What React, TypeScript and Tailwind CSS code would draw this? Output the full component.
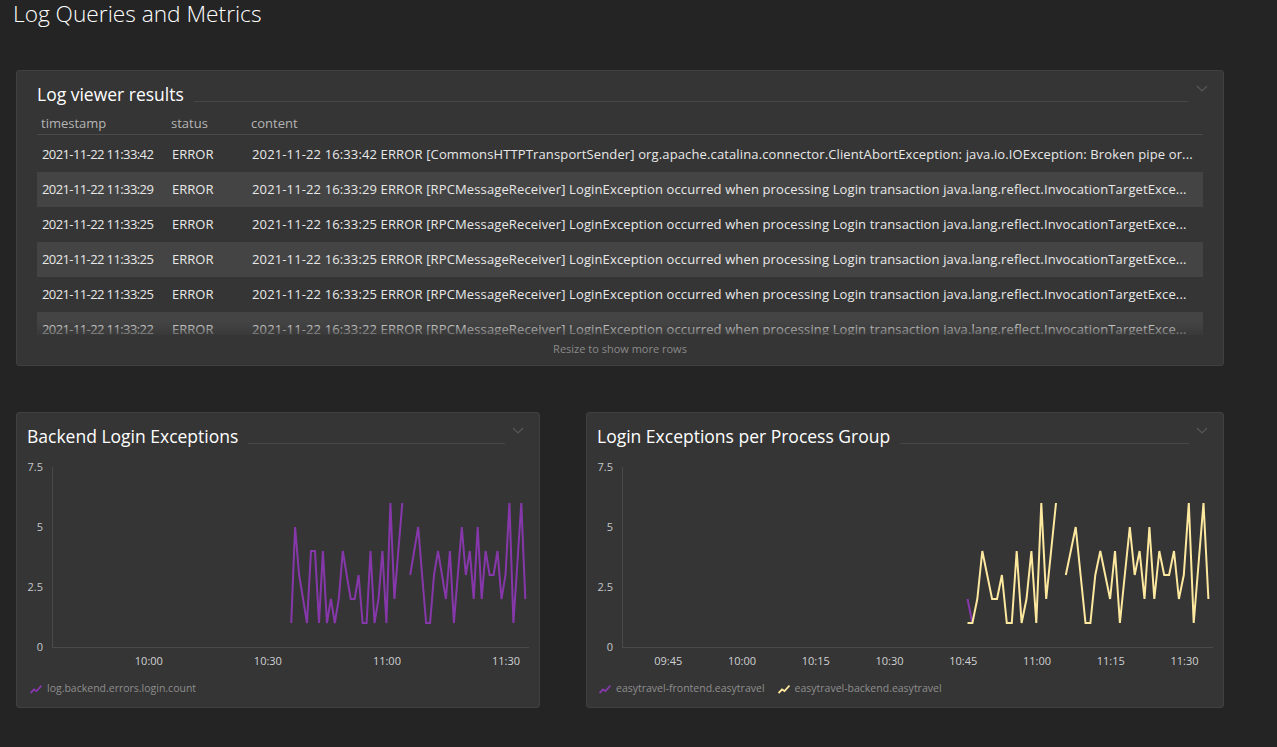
import React from "react";

const T0 = 575.6;
const T1 = 695.8;
const START = 635.87;

const base: (number | null)[] = [
  1, 5, 3, 2, 1, 4, 4, 1, 4, 1, 2, 1, 2, 4, 3, 2, 2, 3, 1, 1, 4, 1, 2, 4, 1, 6, 2, 4, 6, null,
  3, 4, 5, 3, 1, 1, 3, 4, 3, 2, 4, 1, 3, 5, 3, 4, 2, 5, 2, 4, 3, 3, 4, 2, 3, 6, 1, 3.5, 6, 2,
];

type Pt = { i: number; v: number | null };

const leftSeries: Pt[] = base.map((v, i) => ({ i, v }));
const yellowSeries: Pt[] = base
  .map((v, i) => ({ i, v: i === 10 ? 1 : v }))
  .filter((p) => p.i >= 10);
const frontendSeries: Pt[] = [
  { i: 10, v: 2 },
  { i: 11, v: 1 },
];

const rows = [
  {
    ts: "2021-11-22 11:33:42",
    c: "2021-11-22 16:33:42 ERROR [CommonsHTTPTransportSender] org.apache.catalina.connector.ClientAbortException: java.io.IOException: Broken pipe or...",
  },
  {
    ts: "2021-11-22 11:33:29",
    c: "2021-11-22 16:33:29 ERROR [RPCMessageReceiver] LoginException occurred when processing Login transaction java.lang.reflect.InvocationTargetExce...",
  },
  {
    ts: "2021-11-22 11:33:25",
    c: "2021-11-22 16:33:25 ERROR [RPCMessageReceiver] LoginException occurred when processing Login transaction java.lang.reflect.InvocationTargetExce...",
  },
  {
    ts: "2021-11-22 11:33:25",
    c: "2021-11-22 16:33:25 ERROR [RPCMessageReceiver] LoginException occurred when processing Login transaction java.lang.reflect.InvocationTargetExce...",
  },
  {
    ts: "2021-11-22 11:33:25",
    c: "2021-11-22 16:33:25 ERROR [RPCMessageReceiver] LoginException occurred when processing Login transaction java.lang.reflect.InvocationTargetExce...",
  },
  {
    ts: "2021-11-22 11:33:22",
    c: "2021-11-22 16:33:22 ERROR [RPCMessageReceiver] LoginException occurred when processing Login transaction java.lang.reflect.InvocationTargetExce...",
  },
];

function Chevron() {
  return (
    <svg width="12" height="7" viewBox="0 0 12 7" className="absolute right-[15px] top-[14px]">
      <path d="M1 1 L6 6 L11 1" fill="none" stroke="#575757" strokeWidth="1.2" />
    </svg>
  );
}

function LegendIcon({ color }: { color: string }) {
  return (
    <svg width="12" height="10" viewBox="0 0 12 10" className="shrink-0">
      <path d="M0.5 9 L4 5.5 L6.5 7 L11.5 1.5" fill="none" stroke={color} strokeWidth="1.8" />
    </svg>
  );
}

function PanelTitle({ title, wide }: { title: string; wide: boolean }) {
  return (
    <div className={`flex items-end ${wide ? "pl-[20px] pr-[35px]" : "pl-[10px] pr-[34px]"}`}>
      <div className="text-[17.5px] leading-[20px] text-white whitespace-nowrap">{title}</div>
      <div className="flex-1 h-px bg-[#474747] ml-[10px] mb-[2px]" />
    </div>
  );
}

function Chart({
  width,
  axisEnd,
  ticks,
  series,
}: {
  width: number;
  axisEnd: number;
  ticks: { t: number; label: string }[];
  series: { pts: Pt[]; color: string }[];
}) {
  const x = (t: number) => 35 + ((t - T0) / (T1 - T0)) * (axisEnd - 35);
  const y = (v: number) => 190 - 24 * v;
  const segs = (pts: Pt[]) => {
    const out: string[] = [];
    let cur: string[] = [];
    pts.forEach((p) => {
      if (p.v === null) {
        if (cur.length) out.push(cur.join(" "));
        cur = [];
      } else {
        cur.push(`${x(START + p.i).toFixed(1)},${y(p.v).toFixed(1)}`);
      }
    });
    if (cur.length) out.push(cur.join(" "));
    return out;
  };
  return (
    <svg width={width} height={215} className="block mt-[11px]">
      <line x1={35.5} y1={10} x2={35.5} y2={190} stroke="#4a4a4a" strokeWidth={1} />
      <line x1={35} y1={190.5} x2={axisEnd} y2={190.5} stroke="#4a4a4a" strokeWidth={1} />
      {[
        ["7.5", 7.5],
        ["5", 5],
        ["2.5", 2.5],
        ["0", 0],
      ].map(([l, v]) => (
        <text
          key={l as string}
          x={26}
          y={y(v as number) + 4}
          textAnchor="end"
          fontSize="11"
          fill="#c3c7cc"
          fontFamily="'Open Sans', sans-serif"
        >
          {l}
        </text>
      ))}
      {ticks.map((tk) => (
        <text
          key={tk.label}
          x={x(tk.t)}
          y={208}
          textAnchor="middle"
          fontSize="11"
          fill="#d0d2d4"
          fontFamily="'Open Sans', sans-serif"
        >
          {tk.label}
        </text>
      ))}
      {series.map((s, si) =>
        segs(s.pts).map((d, k) => (
          <polyline
            key={`${si}-${k}`}
            points={d}
            fill="none"
            stroke={s.color}
            strokeWidth={2}
            strokeLinejoin="miter"
          />
        ))
      )}
    </svg>
  );
}

const PURPLE = "#8638ab";
const YELLOW = "#fde89f";

export default function App() {
  return (
    <div className="min-h-screen w-full bg-[#242424] font-['Open_Sans',sans-serif] overflow-hidden">
      <h1 className="pl-[13px] text-[22.7px] leading-[28px] font-light text-white whitespace-nowrap">
        Log Queries and Metrics
      </h1>

      {/* Log viewer panel */}
      <div className="relative mt-[42px] ml-[16px] w-[1208px] h-[296px] bg-[#353535] border border-[#404040] rounded-[3px] pt-[13px]">
        <Chevron />
        <PanelTitle title="Log viewer results" wide />
        <div className="px-[20px] mt-[8px]">
          <div className="flex h-[23px] items-center border-b border-[#4a4a4a] pl-[4px] pt-[1px] text-[13px] text-[#b4b4b4]">
            <div className="w-[130px]">timestamp</div>
            <div className="w-[80px]">status</div>
            <div>content</div>
          </div>
          <div className="relative mt-[2px] h-[198px] overflow-hidden">
            {rows.map((r, i) => (
              <div
                key={i}
                className={`flex h-[35px] items-center pl-[5px] pr-[8px] text-[13px] text-[#e8e8e8] ${
                  i % 2 === 1 ? "bg-[#444444]" : ""
                }`}
              >
                <div className="w-[130px] shrink-0 whitespace-nowrap tracking-[-0.6px]">{r.ts}</div>
                <div className="w-[80px] shrink-0">ERROR</div>
                <div className="flex-1 min-w-0 whitespace-nowrap overflow-hidden tracking-[0.13px]">{r.c}</div>
              </div>
            ))}
            <div className="absolute left-0 right-0 bottom-0 h-[14px] bg-gradient-to-b from-transparent to-[#353535]/70" />
          </div>
          <div className="mt-[7px] text-center text-[11px] leading-[14px] text-[#8a8a8a]">Resize to show more rows</div>
        </div>
      </div>

      {/* Charts */}
      <div className="flex mt-[46px] ml-[16px] gap-[46px]">
        <div className="relative w-[524px] h-[296px] bg-[#353535] border border-[#404040] rounded-[3px] pt-[13px]">
          <Chevron />
          <PanelTitle title="Backend Login Exceptions" wide={false} />
          <Chart
            width={522}
            axisEnd={512}
            ticks={[
              { t: 600, label: "10:00" },
              { t: 630, label: "10:30" },
              { t: 660, label: "11:00" },
              { t: 690, label: "11:30" },
            ]}
            series={[{ pts: leftSeries, color: PURPLE }]}
          />
          <div className="flex items-center gap-[5px] pl-[13px] mt-[10px] h-[14px] text-[10.5px] text-[#8e8e8e]">
            <LegendIcon color={PURPLE} />
            <span>log.backend.errors.login.count</span>
          </div>
        </div>

        <div className="relative w-[638px] h-[296px] bg-[#353535] border border-[#404040] rounded-[3px] pt-[13px]">
          <Chevron />
          <PanelTitle title="Login Exceptions per Process Group" wide={false} />
          <Chart
            width={636}
            axisEnd={626}
            ticks={[
              { t: 585, label: "09:45" },
              { t: 600, label: "10:00" },
              { t: 615, label: "10:15" },
              { t: 630, label: "10:30" },
              { t: 645, label: "10:45" },
              { t: 660, label: "11:00" },
              { t: 675, label: "11:15" },
              { t: 690, label: "11:30" },
            ]}
            series={[
              { pts: frontendSeries, color: PURPLE },
              { pts: yellowSeries, color: YELLOW },
            ]}
          />
          <div className="flex items-center pl-[12px] mt-[10px] h-[14px] text-[10.5px] text-[#8e8e8e]">
            <LegendIcon color={PURPLE} />
            <span className="ml-[5px]">easytravel-frontend.easytravel</span>
            <span className="ml-[13px]" />
            <LegendIcon color={YELLOW} />
            <span className="ml-[5px]">easytravel-backend.easytravel</span>
          </div>
        </div>
      </div>
    </div>
  );
}
